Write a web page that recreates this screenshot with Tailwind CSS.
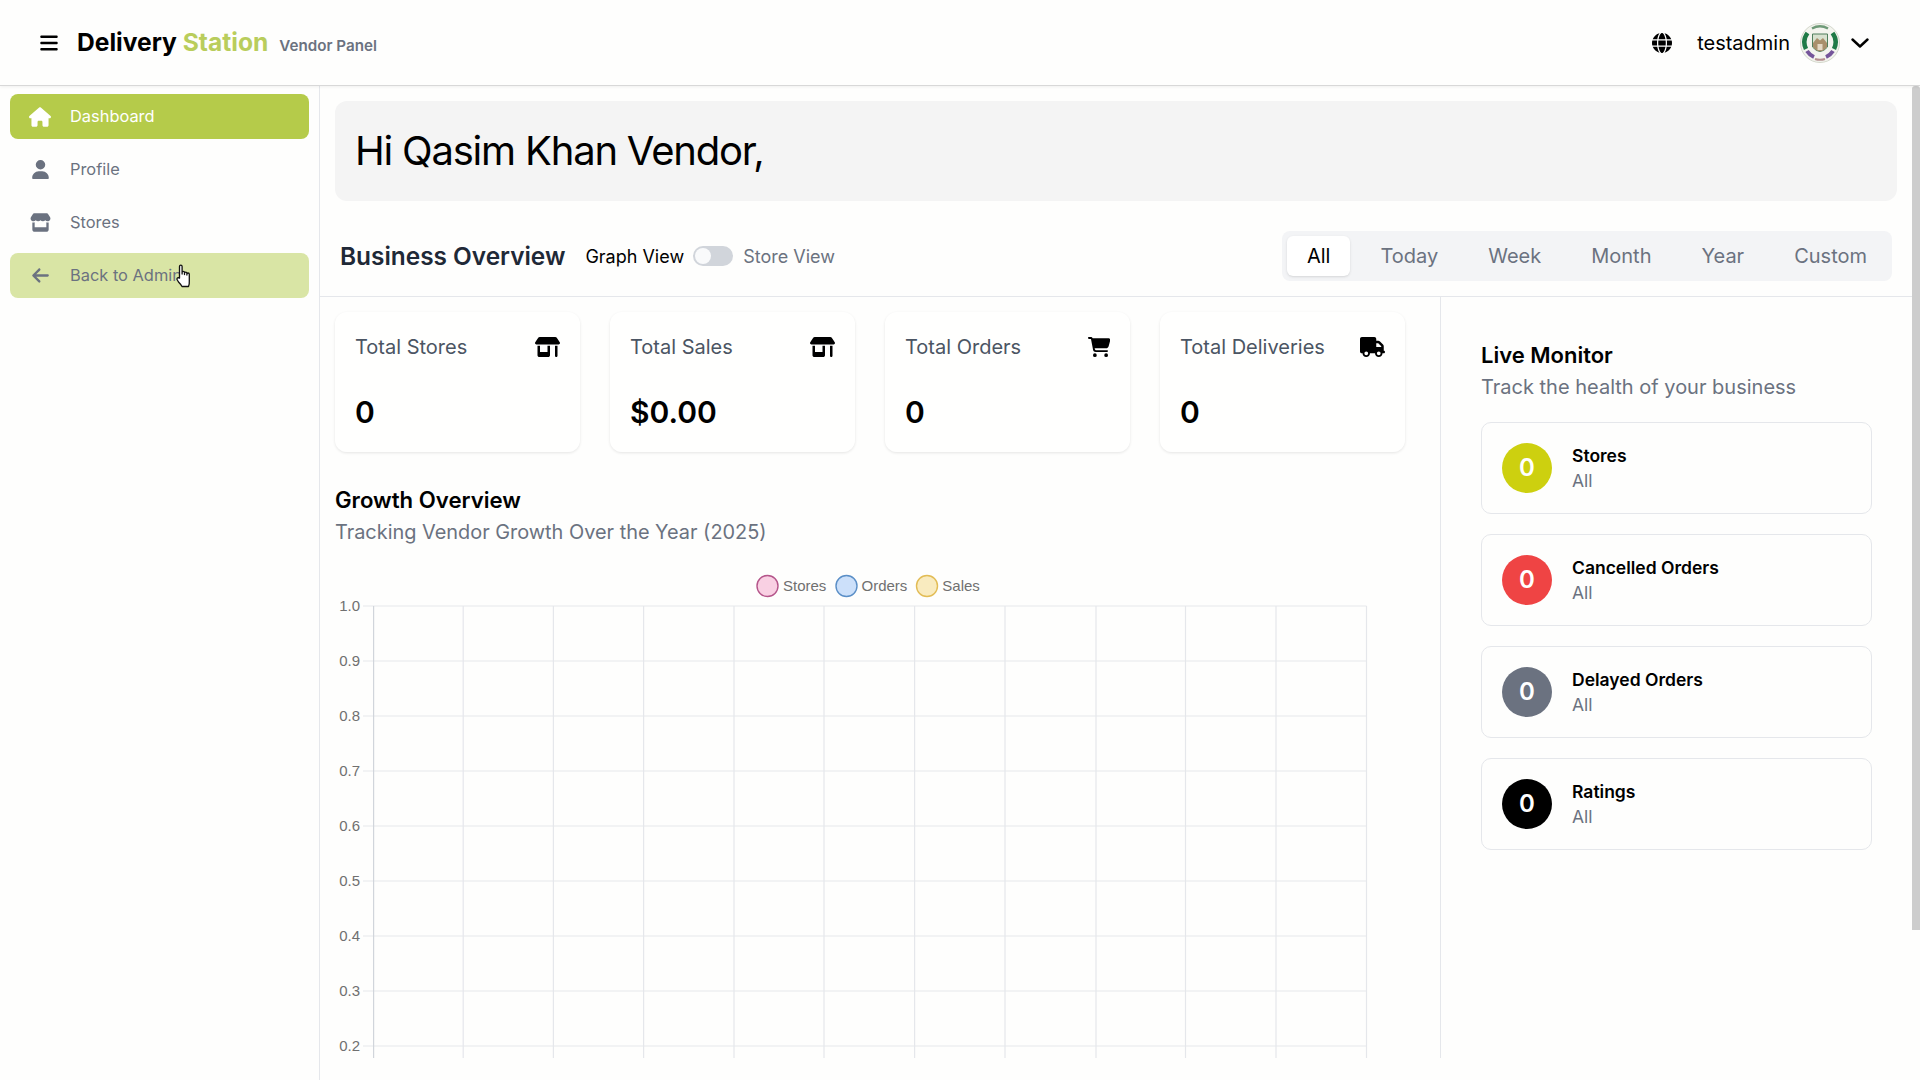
<!DOCTYPE html>
<html lang="en">
<head>
<meta charset="utf-8">
<script src="https://cdn.jsdelivr.net/npm/@tailwindcss/browser@4"></script>
<title>Delivery Station</title>
</head>
<body class="h-screen overflow-hidden bg-[#fefefd] font-['Inter',sans-serif] text-black flex flex-col">
<header class="h-[86px] shrink-0 flex items-center border-b border-[#d8d8d8] shadow-[0_1px_3px_rgba(0,0,0,0.06)] pl-[40px] pr-[51px] z-10 relative">
  <svg class="w-[18px] h-[20px] shrink-0" viewBox="0 0 448 512" fill="#000"><path d="M0 96C0 78.3 14.3 64 32 64H416c17.7 0 32 14.3 32 32s-14.3 32-32 32H32C14.3 128 0 113.7 0 96zM0 256c0-17.7 14.3-32 32-32H416c17.7 0 32 14.3 32 32s-14.3 32-32 32H32c-17.7 0-32-14.3-32-32zM448 416c0 17.7-14.3 32-32 32H32c-17.7 0-32-14.3-32-32s14.3-32 32-32H416c17.7 0 32 14.3 32 32z"/></svg>
  <div class="ml-[19px] text-[24.6px] font-bold leading-none">Delivery <span class="text-[#b9cd5c]">Station</span></div>
  <div class="ml-[11px] mt-[7px] text-[15.2px] font-semibold text-[#6b7280]">Vendor Panel</div>
  <div class="ml-auto flex items-center">
    <svg class="w-[20px] h-[20px]" viewBox="0 0 512 512" fill="#000"><path d="M352 256c0 22.2-1.2 43.6-3.3 64H163.3c-2.2-20.4-3.3-41.8-3.3-64s1.2-43.6 3.3-64H348.7c2.2 20.4 3.3 41.8 3.3 64zm28.8-64H503.9c5.3 20.5 8.1 41.9 8.1 64s-2.8 43.5-8.1 64H380.8c2.1-20.6 3.2-42 3.2-64s-1.1-43.4-3.2-64zm112.6-32H376.7c-10-63.9-29.8-117.4-55.3-151.6c78.3 20.7 142 77.5 172 151.6zm-149.1 0H167.7c6.1-36.4 15.5-68.6 27-94.7c10.5-23.6 22.2-40.7 33.5-51.5C239.4 3.2 248.7 0 256 0s16.6 3.2 27.8 13.8c11.3 10.8 23 27.9 33.5 51.5c11.6 26 20.9 58.2 27 94.7zm-209 0H18.6C48.6 85.9 112.2 29.1 190.6 8.4C165.1 42.6 145.3 96.1 135.3 160zM8.1 192H131.2c-2.1 20.6-3.2 42-3.2 64s1.1 43.4 3.2 64H8.1C2.8 299.5 0 278.1 0 256s2.8-43.5 8.1-64zM194.7 446.6c-11.6-26-20.9-58.2-27-94.6H344.3c-6.1 36.4-15.5 68.6-27 94.6c-10.5 23.6-22.2 40.7-33.5 51.5C272.6 508.8 263.3 512 256 512s-16.6-3.2-27.8-13.8c-11.3-10.8-23-27.9-33.5-51.5zM135.3 352c10 63.9 29.8 117.4 55.3 151.6C112.2 482.9 48.6 426.1 18.6 352H135.3zm358.1 0c-30 74.1-93.6 130.9-171.9 151.6c25.5-34.2 45.2-87.7 55.3-151.6H493.4z"/></svg>
    <span class="ml-[25px] text-[20px]">testadmin</span>
    <svg class="ml-[10px] w-[40px] h-[40px]" viewBox="0 0 40 40">
      <circle cx="20" cy="20" r="19.5" fill="#f3f4ee" stroke="#d4d8cc"/>
      <path d="M12 5.5 A16.5 16.5 0 0 1 28 5.5" fill="none" stroke="#6f9a78" stroke-width="2.5"/>
      <path d="M7.5 10 A15.5 15.5 0 0 0 6 26" fill="none" stroke="#1f7a46" stroke-width="4.5"/>
      <path d="M32.5 10 A15.5 15.5 0 0 1 34 26" fill="none" stroke="#1f7a46" stroke-width="4.5"/>
      <path d="M7 28 A15.5 15.5 0 0 0 14 34" fill="none" stroke="#75559a" stroke-width="4"/>
      <path d="M33 28 A15.5 15.5 0 0 1 26 34" fill="none" stroke="#75559a" stroke-width="4"/>
      <path d="M15 36 A16.5 16.5 0 0 0 25 36" fill="none" stroke="#b58f8f" stroke-width="2"/>
      <path d="M12.5 11 H27.5 V24 Q20 33 12.5 24Z" fill="#d7e1cf" stroke="#4f7f5c" stroke-width="1"/>
      <path d="M13 20 L17 15 L20 17.5 L23 15 L27 20 V24 Q20 32.5 13 24Z" fill="#a98f6c"/>
      <rect x="17.5" y="21" width="5" height="6" fill="#e4d7c4"/>
    </svg>
    <svg class="ml-[11px] w-[18px] h-[10px]" viewBox="0 0 18 10" fill="none" stroke="#000" stroke-width="2.4" stroke-linecap="round" stroke-linejoin="round"><path d="M1.5 1.5 L9 8.5 L16.5 1.5"/></svg>
  </div>
</header>
<div class="flex-1 flex min-h-0">
  <aside class="w-[320px] shrink-0 border-r border-[#e5e7eb] px-[10px] pt-[8px] flex flex-col gap-[8px] relative text-[#6b7280]">
    <a class="h-[45px] rounded-[8px] bg-[#b5cb4a] text-white flex items-center pl-[19px]">
      <span class="w-[22px] flex justify-center"><svg class="w-[22px] h-[20px]" viewBox="0 0 576 512" fill="currentColor"><path d="M575.8 255.5c0 18-15 32.1-32 32.1h-32l.7 160.2c0 2.7-.2 5.4-.5 8.1V472c0 22.1-17.9 40-40 40H456c-1.1 0-2.2 0-3.3-.1c-1.4 .1-2.8 .1-4.2 .1H416 392c-22.1 0-40-17.9-40-40V448 384c0-17.7-14.3-32-32-32H256c-17.7 0-32 14.3-32 32v64 24c0 22.1-17.9 40-40 40H160 128.1c-1.5 0-3-.1-4.5-.2c-1.2 .1-2.4 .2-3.6 .2H104c-22.1 0-40-17.9-40-40V360c0-.9 0-1.9 .1-2.8V287.6H32c-18 0-32-14-32-32.1c0-9 3-17 10-24L266.4 8c7-7 15-8 22-8s15 2 21 7L564.8 231.5c8 7 12 15 11 24z"/></svg></span>
      <span class="ml-[19px] text-[16.4px]">Dashboard</span>
    </a>
    <a class="h-[45px] rounded-[8px] flex items-center pl-[19px]">
      <span class="w-[22px] flex justify-center"><svg class="w-[17px] h-[19px]" viewBox="0 0 448 512" fill="currentColor"><path d="M224 256A128 128 0 1 0 224 0a128 128 0 1 0 0 256zm-45.7 48C79.8 304 0 383.8 0 482.3C0 498.7 13.3 512 29.7 512H418.3c16.4 0 29.7-13.3 29.7-29.7C448 383.8 368.2 304 269.7 304H178.3z"/></svg></span>
      <span class="ml-[19px] text-[16.4px]">Profile</span>
    </a>
    <a class="h-[45px] rounded-[8px] flex items-center pl-[19px]">
      <span class="w-[22px] flex justify-center"><svg class="w-[21px] h-[19px]" viewBox="0 0 576 512" fill="currentColor"><path d="M547.6 103.8L490.3 13.1C485.2 5 476.1 0 466.4 0H109.6C99.9 0 90.8 5 85.7 13.1L28.3 103.8c-29.6 46.8-3.4 111.9 51.9 119.4c4 .5 8.1 .8 12.1 .8c26.1 0 49.3-11.4 65.2-29c15.9 17.6 39.1 29 65.2 29c26.1 0 49.3-11.4 65.2-29c15.9 17.6 39.1 29 65.2 29c26.2 0 49.3-11.4 65.2-29c16 17.6 39.1 29 65.2 29c4.1 0 8.1-.3 12.1-.8c55.5-7.4 81.8-72.5 52.1-119.4zM499.7 254.9l-.1 0c-5.3 .7-10.7 1.1-16.2 1.1c-12.4 0-24.3-1.9-35.4-5.3V384H128V250.6c-11.2 3.5-23.2 5.4-35.6 5.4c-5.5 0-11-.4-16.3-1.1l-.1 0c-4.1-.6-8.1-1.3-12-2.3V384v64c0 35.3 28.7 64 64 64H448c35.3 0 64-28.7 64-64V384 252.6c-4 1-8 1.8-12.3 2.3z"/></svg></span>
      <span class="ml-[19px] text-[16.4px]">Stores</span>
    </a>
    <a class="h-[45px] rounded-[8px] bg-[#d9e5a5] flex items-center pl-[19px]">
      <span class="w-[22px] flex justify-center"><svg class="w-[17px] h-[19px]" viewBox="0 0 448 512" fill="currentColor"><path d="M9.4 233.4c-12.5 12.5-12.5 32.8 0 45.3l160 160c12.5 12.5 32.8 12.5 45.3 0s12.5-32.8 0-45.3L109.2 288 416 288c17.7 0 32-14.3 32-32s-14.3-32-32-32l-306.7 0L214.6 118.6c12.5-12.5 12.5-32.8 0-45.3s-32.8-12.5-45.3 0l-160 160z"/></svg></span>
      <span class="ml-[19px] text-[16.4px]">Back to Admin</span>
    </a>
    <svg class="absolute left-[176px] top-[178px] w-[17px] h-[24px]" viewBox="0 0 17 24" fill="#fff" stroke="#111" stroke-width="1.3" stroke-linejoin="round"><path d="M3.5 14 V2.5 a1.3 1.3 0 0 1 2.6 0 V10 V8.5 a1.2 1.2 0 0 1 2.4 0 V10.5 V9.3 a1.2 1.2 0 0 1 2.4 0 V11 V10.2 a1.2 1.2 0 0 1 2.4 0 V17 Q13.5 20 12.5 22.5 H6 Q4.5 20 2.5 18 L1 15.5 Q0.8 13.8 2.3 13.7 Z"/></svg>
  </aside>
  <main class="flex-1 min-w-0 overflow-hidden flex flex-col">
    <section class="mx-[15px] mt-[15px] h-[100px] shrink-0 rounded-[12px] bg-[#f4f4f4] flex items-center px-[20px]">
      <h1 class="text-[40px] leading-none tracking-[-1.2px]">Hi Qasim Khan Vendor,</h1>
    </section>
    <div class="mt-[30px] h-[66px] shrink-0 border-b border-[#e5e7eb] pl-[20px] pr-[20px] pb-[16px] flex items-center">
      <h2 class="mt-[1px] text-[24.4px] font-semibold text-[#1f2937]">Business Overview</h2>
      <span class="mt-[1px] ml-[20px] text-[18px]">Graph View</span>
      <span class="ml-[9px] w-[40px] h-[20px] rounded-full bg-[#d1d5db] p-[2px]"><span class="block w-[16px] h-[16px] rounded-full bg-[#f9fafb]"></span></span>
      <span class="mt-[1px] ml-[10px] text-[18px] text-[#6b7280]">Store View</span>
      <div class="ml-auto h-[50px] rounded-[8px] bg-[#f3f4f6] p-[5px] flex gap-[10px] text-[20px] text-[#6b7280]">
        <span class="h-[40px] px-[20px] rounded-[6px] bg-white text-black shadow-sm flex items-center">All</span>
        <span class="h-[40px] px-[20px] flex items-center">Today</span>
        <span class="h-[40px] px-[20px] flex items-center">Week</span>
        <span class="h-[40px] px-[20px] flex items-center">Month</span>
        <span class="h-[40px] px-[20px] flex items-center">Year</span>
        <span class="h-[40px] px-[20px] flex items-center">Custom</span>
      </div>
    </div>
    <div class="flex-1 min-h-0 flex mb-[22px] overflow-hidden">
      <div class="w-[1121px] shrink-0 border-r border-[#e5e7eb] pl-[15px] pr-[35px] pt-[15px] overflow-hidden">
        <div class="grid grid-cols-4 gap-[30px]">
          <div class="h-[140px] rounded-[12px] bg-white/60 shadow-[0_1px_3px_rgba(0,0,0,0.1)] px-[20px] pt-[20px]">
            <div class="flex items-center justify-between h-[30px] text-[20px] text-[#4b5563]">Total Stores
              <svg class="w-[25px] h-[20px]" viewBox="0 0 640 512"><path d="M36.8 192H603.2c20.3 0 36.8-16.5 36.8-36.8c0-7.3-2.2-14.4-6.2-20.4L558.2 21.4C549.3 8 534.4 0 518.3 0H121.7c-16 0-31 8-39.9 21.4L6.2 134.7c-4 6.1-6.2 13.2-6.2 20.4C0 175.5 16.5 192 36.8 192zM64 224V384v80c0 26.5 21.5 48 48 48H336c26.5 0 48-21.5 48-48V384 224H320V384H128V224H64zm448 0V480c0 17.7 14.3 32 32 32s32-14.3 32-32V224H512z"/></svg></div>
            <div class="mt-[30px] text-[30px] font-semibold leading-[40px]">0</div>
          </div>
          <div class="h-[140px] rounded-[12px] bg-white/60 shadow-[0_1px_3px_rgba(0,0,0,0.1)] px-[20px] pt-[20px]">
            <div class="flex items-center justify-between h-[30px] text-[20px] text-[#4b5563]">Total Sales
              <svg class="w-[25px] h-[20px]" viewBox="0 0 640 512"><path d="M36.8 192H603.2c20.3 0 36.8-16.5 36.8-36.8c0-7.3-2.2-14.4-6.2-20.4L558.2 21.4C549.3 8 534.4 0 518.3 0H121.7c-16 0-31 8-39.9 21.4L6.2 134.7c-4 6.1-6.2 13.2-6.2 20.4C0 175.5 16.5 192 36.8 192zM64 224V384v80c0 26.5 21.5 48 48 48H336c26.5 0 48-21.5 48-48V384 224H320V384H128V224H64zm448 0V480c0 17.7 14.3 32 32 32s32-14.3 32-32V224H512z"/></svg></div>
            <div class="mt-[30px] text-[30px] font-semibold leading-[40px]">$0.00</div>
          </div>
          <div class="h-[140px] rounded-[12px] bg-white/60 shadow-[0_1px_3px_rgba(0,0,0,0.1)] px-[20px] pt-[20px]">
            <div class="flex items-center justify-between h-[30px] text-[20px] text-[#4b5563]">Total Orders
              <svg class="w-[22.5px] h-[20px]" viewBox="0 0 576 512"><path d="M0 24C0 10.7 10.7 0 24 0H69.5c22 0 41.5 12.8 50.6 32h411c26.3 0 45.5 25 38.6 50.4l-41 152.3c-8.5 31.4-37 53.3-69.5 53.3H170.7l5.4 28.5c2.2 11.3 12.1 19.5 23.6 19.5H488c13.3 0 24 10.7 24 24s-10.7 24-24 24H199.7c-34.6 0-64.3-24.6-70.7-58.5L77.4 54.5c-.7-3.8-4-6.5-7.9-6.5H24C10.7 48 0 37.3 0 24zM128 464a48 48 0 1 1 96 0 48 48 0 1 1 -96 0zm336-48a48 48 0 1 1 0 96 48 48 0 1 1 0-96z"/></svg></div>
            <div class="mt-[30px] text-[30px] font-semibold leading-[40px]">0</div>
          </div>
          <div class="h-[140px] rounded-[12px] bg-white/60 shadow-[0_1px_3px_rgba(0,0,0,0.1)] px-[20px] pt-[20px]">
            <div class="flex items-center justify-between h-[30px] text-[20px] text-[#4b5563]">Total Deliveries
              <svg class="w-[25px] h-[20px]" viewBox="0 0 640 512"><path d="M48 0C21.5 0 0 21.5 0 48V368c0 26.5 21.5 48 48 48H64c0 53 43 96 96 96s96-43 96-96H384c0 53 43 96 96 96s96-43 96-96h32c17.7 0 32-14.3 32-32s-14.3-32-32-32V288 256 237.3c0-17-6.7-33.3-18.7-45.3L512 114.7c-12-12-28.3-18.7-45.3-18.7H416V48c0-26.5-21.5-48-48-48H48zM416 160h50.7L544 237.3V256H416V160zM112 416a48 48 0 1 1 96 0 48 48 0 1 1 -96 0zm368-48a48 48 0 1 1 0 96 48 48 0 1 1 0-96z"/></svg></div>
            <div class="mt-[30px] text-[30px] font-semibold leading-[40px]">0</div>
          </div>
        </div>
        <h3 class="mt-[33px] text-[22.2px] font-semibold leading-[30px]">Growth Overview</h3>
        <p class="mt-[2px] text-[19.9px] leading-[30px] text-[#6b7280]">Tracking Vendor Growth Over the Year (2025)</p>
        <svg class="block mt-[23px] w-[1070px] h-[512px]" viewBox="335 570 1070 512" font-family="Liberation Sans, Arial, sans-serif" font-size="15" fill="#707070">
          <g stroke="#e5e7eb" stroke-width="1.2">
            <path d="M463.2 606V1058M553.4 606V1058M643.6 606V1058M734 606V1058M824 606V1058M914.6 606V1058M1005 606V1058M1096 606V1058M1185.5 606V1058M1276 606V1058M1366.5 606V1058"/>
            <path d="M363 606H1366.5M363 661H1366.5M363 716H1366.5M363 771H1366.5M363 826H1366.5M363 881H1366.5M363 936H1366.5M363 991H1366.5M363 1046H1366.5"/>
          </g>
          <path d="M373.6 606V1058" stroke="#d1d5db" stroke-width="1.2"/>
          <g text-anchor="end">
            <text x="360" y="611">1.0</text><text x="360" y="666">0.9</text><text x="360" y="721">0.8</text><text x="360" y="776">0.7</text><text x="360" y="831">0.6</text><text x="360" y="886">0.5</text><text x="360" y="941">0.4</text><text x="360" y="996">0.3</text><text x="360" y="1051">0.2</text>
          </g>
          <circle cx="767.5" cy="586" r="10.5" fill="#f9d0e3" stroke="#b5568b" stroke-width="1.4"/>
          <text x="783" y="590.5">Stores</text>
          <circle cx="846.5" cy="586" r="10.5" fill="#cce0fa" stroke="#5b8fc7" stroke-width="1.4"/>
          <text x="861.5" y="590.5">Orders</text>
          <circle cx="927" cy="586" r="10.5" fill="#f9ebbf" stroke="#e2bc55" stroke-width="1.4"/>
          <text x="942.3" y="590.5">Sales</text>
        </svg>
      </div>
      <div class="flex-1 min-w-0 pl-[40px] pr-[40px] pt-[43px]">
        <h3 class="text-[22px] font-semibold leading-[30px]">Live Monitor</h3>
        <p class="mt-[2px] text-[20px] leading-[30px] text-[#6b7280]">Track the health of your business</p>
        <div class="mt-[20px] flex flex-col gap-[20px]">
          <div class="h-[92px] rounded-[10px] border border-[#e5e7eb] flex items-center pl-[20px]">
            <span class="w-[50px] h-[50px] rounded-full bg-[#cdd00f] text-white text-[24px] font-semibold flex items-center justify-center">0</span>
            <div class="ml-[20px]"><div class="text-[17.5px] font-semibold leading-[25px]">Stores</div><div class="text-[17.5px] leading-[25px] text-[#6b7280]">All</div></div>
          </div>
          <div class="h-[92px] rounded-[10px] border border-[#e5e7eb] flex items-center pl-[20px]">
            <span class="w-[50px] h-[50px] rounded-full bg-[#ef4444] text-white text-[24px] font-semibold flex items-center justify-center">0</span>
            <div class="ml-[20px]"><div class="text-[17.5px] font-semibold leading-[25px]">Cancelled Orders</div><div class="text-[17.5px] leading-[25px] text-[#6b7280]">All</div></div>
          </div>
          <div class="h-[92px] rounded-[10px] border border-[#e5e7eb] flex items-center pl-[20px]">
            <span class="w-[50px] h-[50px] rounded-full bg-[#6b7280] text-white text-[24px] font-semibold flex items-center justify-center">0</span>
            <div class="ml-[20px]"><div class="text-[17.5px] font-semibold leading-[25px]">Delayed Orders</div><div class="text-[17.5px] leading-[25px] text-[#6b7280]">All</div></div>
          </div>
          <div class="h-[92px] rounded-[10px] border border-[#e5e7eb] flex items-center pl-[20px]">
            <span class="w-[50px] h-[50px] rounded-full bg-black text-white text-[24px] font-semibold flex items-center justify-center">0</span>
            <div class="ml-[20px]"><div class="text-[17.5px] font-semibold leading-[25px]">Ratings</div><div class="text-[17.5px] leading-[25px] text-[#6b7280]">All</div></div>
          </div>
        </div>
      </div>
    </div>
  </main>
  <div class="w-[8px] shrink-0"><div class="h-[844px] rounded-t-[3px] bg-[#cdcdcd]"></div></div>
</div>
</body>
</html>
